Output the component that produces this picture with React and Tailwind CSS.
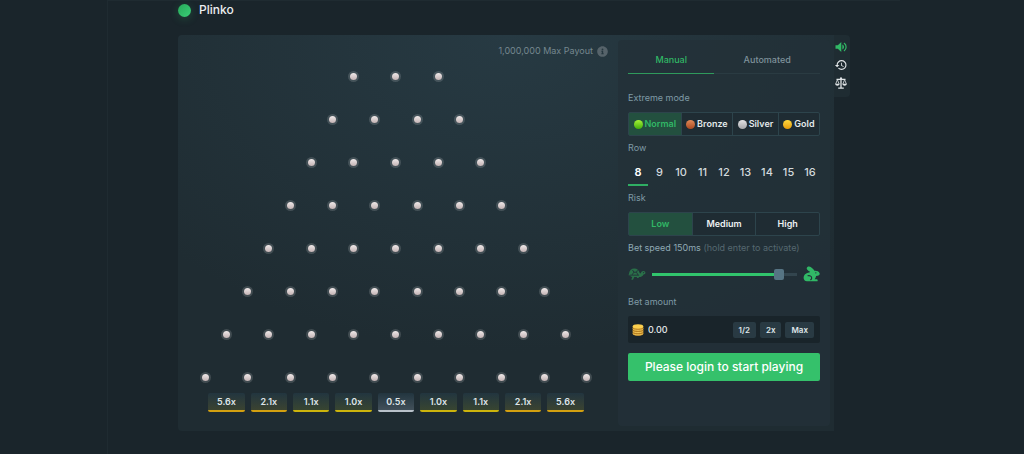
import { useState } from "react";
import clsx from "clsx";
import { FaInfoCircle } from "react-icons/fa";
import { MdHistory } from "react-icons/md";

const PEG_ROWS = [3, 4, 5, 6, 7, 8, 9, 10];

const BUCKETS = [
  { label: "5.6x", tone: "high" },
  { label: "2.1x", tone: "high" },
  { label: "1.1x", tone: "mid" },
  { label: "1.0x", tone: "mid" },
  { label: "0.5x", tone: "low" },
  { label: "1.0x", tone: "mid" },
  { label: "1.1x", tone: "mid" },
  { label: "2.1x", tone: "high" },
  { label: "5.6x", tone: "high" },
];

const bucketTones = {
  high: "border-[#d3a010] to-[#3b4330]",
  mid: "border-[#ccb40c] to-[#384530]",
  low: "border-[#b9c2ca] to-[#42505a]",
};

const MODES = [
  { name: "Normal", ball: "from-[#a4f436] to-[#3fae08]" },
  { name: "Bronze", ball: "from-[#e08a58] to-[#a9481f]" },
  { name: "Silver", ball: "from-[#e4e4e6] to-[#a5a6aa]" },
  { name: "Gold", ball: "from-[#ffd93c] to-[#e39a05]" },
];

const ROWS = [8, 9, 10, 11, 12, 13, 14, 15, 16];
const RISKS = ["Low", "Medium", "High"];

function TurtleIcon({ className }) {
  return (
    <svg viewBox="0 0 20 15" className={className} aria-hidden="true">
      <path
        fill="currentColor"
        d="M1 7.5C1.5 3.5 4 1.5 7 1.5c3.200 0 5.200 2.200 6 5 .4.6 1 .5 1.300-.1.500-1.600 1.500-2.400 2.900-2.300 1.400.1 2.200 1 2.200 2.100 0 1.200-.9 1.800-2.200 1.900-.7 1.500-1.700 2.300-3.200 2.600l-1.700.2-.7 1.100H9.600l.6-1.200H7l-1.400 3.200H3.700l1-3.300C3.500 10.500 2.700 10 2.200 9.200L.6 9z"
      />
      <path
        fill="none"
        stroke="#22313a"
        strokeWidth="1"
        d="M1.800 8.800h10.500M5 3l1.500 2.500-2 3M6.500 5.500h3L11 8.500M9.500 5.500 10.500 3.300"
      />
      <circle cx="17.300" cy="5.900" r="0.700" fill="#22313a" />
    </svg>
  );
}

function RabbitIcon({ className }) {
  return (
    <svg viewBox="0 0 18 17" className={className} aria-hidden="true">
      <path
        fill="currentColor"
        d="M5 .8c1.200-.7 2.700-.1 4.200 1 1.400 1.100 2.400 2.200 2.900 3.200 2.300-.3 4.600.6 5.400 2.400.7 1.500-.3 2.700-2 3l-1.600.3c-.2 1.500-.8 2.600-1.600 3.400h2c.8 0 1.300.5 1.300 1.200 0 .6-.4.9-1 .9H4.200C1.900 16.200.6 14.700.6 12.600.6 9.800 2.500 8 5.200 7.200c.9-.3 1.700-.5 2.400-.9C6.200 5.600 4.900 4.700 4.200 3.500 3.600 2.500 4 1.300 5 .8z"
      />
      <path
        fill="none"
        stroke="#22313a"
        strokeWidth="1.200"
        strokeLinecap="round"
        d="M5.200 10.300c2.200-.5 4.200.8 4 2.600-.1.800-.5 1.300-1.100 1.700"
      />
      <circle cx="13.600" cy="7.300" r="0.700" fill="#22313a" />
    </svg>
  );
}

function CoinsIcon({ className }) {
  return (
    <svg viewBox="0 0 12 12" className={className} aria-hidden="true">
      <path fill="#b98122" d="M.7 2.500h10.600v7.200c0 1.300-2.400 2.100-5.300 2.100S.7 11 .7 9.700z" />
      <path
        fill="none"
        stroke="#f0c75a"
        strokeWidth="1"
        d="M.7 4.800c.6 1 2.800 1.500 5.300 1.500s4.700-.5 5.300-1.500M.7 7.100c.6 1 2.800 1.500 5.300 1.500s4.700-.5 5.300-1.500M.7 9.400c.6 1 2.800 1.500 5.300 1.500s4.700-.5 5.300-1.500"
      />
      <ellipse cx="6" cy="2.500" rx="5.300" ry="2.200" fill="#fbcf4e" />
    </svg>
  );
}

function SoundIcon({ className }) {
  return (
    <svg viewBox="0 0 12 12" className={className} aria-hidden="true">
      <path fill="currentColor" d="M.5 4.200h2.300L6.300 1v10L2.800 7.800H.5z" />
      <path fill="currentColor" d="M7.300 3.600c1.200.5 1.700 1.400 1.700 2.400s-.5 1.900-1.700 2.400z" />
      <path
        fill="none"
        stroke="currentColor"
        strokeWidth="1.200"
        strokeLinecap="round"
        d="M9.300 2.300c1.200.9 1.800 2.200 1.800 3.700s-.6 2.800-1.800 3.700"
      />
    </svg>
  );
}

function ScalesIcon({ className }) {
  return (
    <svg viewBox="0 0 12 12" className={className} aria-hidden="true">
      <path
        fill="none"
        stroke="currentColor"
        strokeWidth="1.300"
        d="M6 .3v10.400M1.500 2.300h9M3.200 11.200h5.600"
      />
      <path
        fill="none"
        stroke="currentColor"
        strokeWidth="0.800"
        d="M.7 7 2.400 2.600 4.100 7M7.900 7l1.700-4.400L11.300 7"
      />
      <path
        fill="currentColor"
        d="M.1 6.700h4.600C4.500 8 3.600 8.700 2.400 8.700S.3 8 .1 6.700zM7.300 6.700h4.600c-.2 1.300-1.100 2-2.300 2s-2.100-.7-2.300-2z"
      />
      <circle cx="6" cy="1.900" r="1.200" fill="currentColor" />
    </svg>
  );
}

function Board() {
  return (
    <section className="flex-1 pl-1.5 pr-2.5 pt-[3px] flex flex-col">
      <div className="flex items-center justify-end gap-1 h-4 text-[9px] text-[#75878f]">
        1,000,000 Max Payout
        <FaInfoCircle className="w-[11px] h-[11px] text-[#56636a]" />
      </div>

      <div className="-mt-1">
        {PEG_ROWS.map((count) => (
          <div key={count} className="flex justify-center h-[43px]">
            {Array.from({ length: count }, (_, i) => (
              <div key={i} className="w-1/10 flex items-center justify-center">
                <span className="w-[7px] h-[7px] rounded-full bg-linear-to-b from-[#efe9e9] to-[#c3b3b4] ring-2 ring-white/15" />
              </div>
            ))}
          </div>
        ))}
      </div>

      <div className="flex justify-center -mt-1.5">
        {BUCKETS.map((bucket, i) => (
          <div key={i} className="w-1/10 px-[3px]">
            <div
              className={clsx(
                "h-[19px] rounded-xs border-b-2 bg-linear-to-b from-[#22353f] flex items-center justify-center text-[9px] font-semibold text-[#dfe5e8]",
                bucketTones[bucket.tone]
              )}
            >
              {bucket.label}
            </div>
          </div>
        ))}
      </div>
    </section>
  );
}

function Controls() {
  const [tab, setTab] = useState("Manual");
  const [mode, setMode] = useState("Normal");
  const [rows, setRows] = useState(8);
  const [risk, setRisk] = useState("Low");
  const [speed, setSpeed] = useState(90);
  const [amount, setAmount] = useState("0.00");

  return (
    <section className="w-[212px] shrink-0 rounded-sm bg-[#233138]/80 px-2.5 pt-1.5 text-[9px] text-[#7f9aa6]">
      <div className="flex">
        {["Manual", "Automated"].map((name) => (
          <button
            key={name}
            onClick={() => setTab(name)}
            className={clsx(
              "h-7 font-medium border-b",
              tab === name
                ? "w-[45%] text-[#31b866] border-[#2f9a5c]"
                : "w-[55%] text-[#7f929b] border-[#2a3b42]"
            )}
          >
            {name}
          </button>
        ))}
      </div>

      {/* Extreme mode */}
      <h2 className="mt-4 h-4 leading-4">Extreme mode</h2>
      <div className="mt-1.5 flex h-6 rounded-xs border border-[#2d444c] divide-x divide-[#2d444c] bg-[#1f2c33]">
        {MODES.map(({ name, ball }) => (
          <button
            key={name}
            onClick={() => setMode(name)}
            className={clsx(
              "flex-auto flex items-center justify-center gap-0.5 font-semibold",
              mode === name ? "bg-[#23503f] text-[#31b866]" : "text-[#e3e8ea]"
            )}
          >
            <span className={clsx("w-[9px] h-[9px] rounded-full bg-linear-to-b", ball)} />
            {name}
          </button>
        ))}
      </div>

      {/* Row */}
      <h2 className="mt-1 h-4 leading-4">Row</h2>
      <div className="mt-1 flex justify-between">
        {ROWS.map((n) => (
          <button
            key={n}
            onClick={() => setRows(n)}
            className={clsx(
              "w-5 h-[26px] text-[11px] border-b-2",
              rows === n
                ? "font-semibold text-white border-[#2fae63]"
                : "font-medium text-[#d3dadd] border-transparent"
            )}
          >
            {n}
          </button>
        ))}
      </div>

      {/* Risk */}
      <h2 className="mt-1 h-4 leading-4">Risk</h2>
      <div className="mt-1.5 flex h-6 rounded-xs border border-[#2d444c] divide-x divide-[#2d444c] bg-[#1f2c33]">
        {RISKS.map((name) => (
          <button
            key={name}
            onClick={() => setRisk(name)}
            className={clsx(
              "flex-1 font-semibold",
              risk === name ? "bg-[#23503f] text-[#31b866]" : "text-[#eef1f2]"
            )}
          >
            {name}
          </button>
        ))}
      </div>

      {/* Bet speed */}
      <label htmlFor="speed" className="block mt-1 h-4 leading-4 whitespace-nowrap text-[#8fa9b4]">
        Bet speed 150ms <span className="text-[#566870]">(hold enter to activate)</span>
      </label>
      <div className="mt-2 flex items-center gap-1.5 h-5">
        <TurtleIcon className="w-[18px] h-[14px] shrink-0 text-[#2a7049]" />
        <input
          id="speed"
          type="range"
          min="0"
          max="100"
          value={speed}
          onChange={(e) => setSpeed(Number(e.target.value))}
          style={{ "--fill": `${speed}%` }}
          className="min-w-0 flex-1 h-[3px] appearance-none bg-[linear-gradient(to_right,#31c46c_var(--fill),#33454e_var(--fill))] [&::-webkit-slider-thumb]:appearance-none [&::-webkit-slider-thumb]:w-2.5 [&::-webkit-slider-thumb]:h-[11px] [&::-webkit-slider-thumb]:rounded-xs [&::-webkit-slider-thumb]:bg-[#567483]"
        />
        <RabbitIcon className="w-[17px] h-4 shrink-0 text-[#31b866]" />
      </div>

      {/* Bet amount */}
      <label htmlFor="amount" className="block mt-2.5 h-4 leading-4">
        Bet amount
      </label>
      <div className="mt-1.5 flex items-center gap-1 h-[27px] rounded-xs bg-[#19242a] pl-1 pr-1.5">
        <CoinsIcon className="w-3 h-3 shrink-0" />
        <input
          id="amount"
          value={amount}
          onChange={(e) => setAmount(e.target.value)}
          className="min-w-0 flex-1 bg-transparent font-medium text-[#e6eaec] outline-none"
        />
        {["1/2", "2x", "Max"].map((name) => (
          <button
            key={name}
            className="h-4 px-1.5 rounded-xs bg-[#293a43] text-[8px] font-semibold text-[#dfe5e8]"
          >
            {name}
          </button>
        ))}
      </div>

      <button className="mt-2.5 w-full h-7 rounded-xs bg-[#35c16b] text-xs font-medium text-white">
        Please login to start playing
      </button>
    </section>
  );
}

export default function App() {
  return (
    <div className="min-h-screen bg-[#1a252b] font-['Inter',sans-serif] pl-[107px] pr-[124px]">
      <main className="min-h-screen border-l border-t border-[#1f2b31] pl-[70px] pr-[50px]">
        <header className="flex items-center gap-2 h-[18px]">
          <span className="w-[13px] h-[13px] rounded-full bg-linear-to-br from-[#27a85a] to-[#3ad077] shadow-[0_2px_8px_#35c16b40]" />
          <h1 className="text-xs font-medium text-[#eceff0]">Plinko</h1>
        </header>

        <div className="mt-4 flex items-start">
          <div className="flex-1 flex rounded-l-sm bg-[#1f2c32] bg-radial-[ellipse_70%_80%_at_50%_0%] from-[#273a43] to-[#1f2c32] pt-[5px] pr-1 pb-[5px] min-h-[396px]">
            <Board />
            <Controls />
          </div>
          <aside className="w-4 pr-[3px] flex flex-col items-center gap-1.5 pt-1.5 pb-2 rounded-r-sm bg-[#1f2c32]">
            <button aria-label="Sound">
              <SoundIcon className="w-3 h-3 text-[#31b866]" />
            </button>
            <button aria-label="History">
              <MdHistory className="w-3.5 h-3 scale-110 text-[#e0e5e7]" />
            </button>
            <button aria-label="Fairness">
              <ScalesIcon className="w-3 h-3 text-[#e0e5e7]" />
            </button>
          </aside>
        </div>
      </main>
    </div>
  );
}
